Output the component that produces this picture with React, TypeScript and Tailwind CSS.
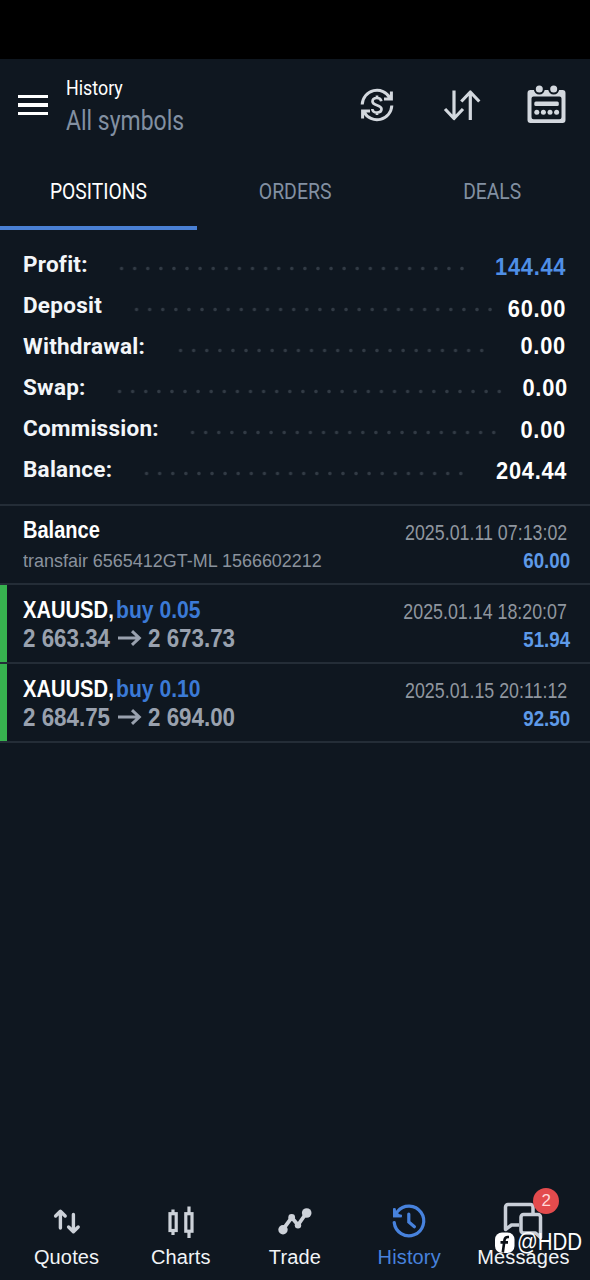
import React from 'react';

const summary = [
  { label: 'Profit:', value: '144.44', dots: 'left-[115px] w-[354px]', valueClass: 'text-[#4f8fe6] pt-[2px] pr-[24px]' },
  { label: 'Deposit', value: '60.00', dots: 'left-[130px] w-[367px]', valueClass: 'text-white pt-[3px] pr-[24px]' },
  { label: 'Withdrawal:', value: '0.00', dots: 'left-[174px] w-[315px]', valueClass: 'text-white -mt-px pr-[24px]' },
  { label: 'Swap:', value: '0.00', dots: 'left-[113px] w-[393px]', valueClass: 'text-white pt-0 pr-[22px]' },
  { label: 'Commission:', value: '0.00', dots: 'left-[186px] w-[315px]', valueClass: 'text-white pt-[1px] pr-[24px]' },
  { label: 'Balance:', value: '204.44', dots: 'left-[140px] w-[328px]', valueClass: 'text-white pt-[1px] pr-[23px]' },
];

const deals = [
  { symbol: 'XAUUSD,', side: 'buy 0.05', open: '2 663.34', close: '2 673.73', time: '2025.01.14 18:20:07', profit: '51.94' },
  { symbol: 'XAUUSD,', side: 'buy 0.10', open: '2 684.75', close: '2 694.00', time: '2025.01.15 20:11:12', profit: '92.50' },
];

const ExchangeIcon = () => (
  <svg width="34" height="34" viewBox="0 0 34 34" fill="none" stroke="#d3d8de" strokeWidth="3">
    <path d="M2.2 16.5A14.8 14.8 0 0 1 30 10" />
    <path d="M31.4 3.500v7.500H24" />
    <path d="M29 7.500l3 4.500h-6z" fill="#d3d8de" stroke="none" />
    <path d="M31.8 17.500A14.8 14.8 0 0 1 4 24" />
    <path d="M2.600 30.500V23H10" />
    <path d="M5 26.500L2 22h6z" fill="#d3d8de" stroke="none" />
    <path d="M21.300 13.200c-.3-2-2-3.200-4.400-3.200-2.600 0-4.400 1.300-4.400 3.500 0 4.600 9 2.800 9 7.500 0 2.200-1.900 3.500-4.600 3.500s-4.400-1.300-4.600-3.500M17 7.500v2.500M17 24.500V27" strokeWidth="2.700" />
  </svg>
);

const SortIcon = () => (
  <svg width="40" height="34" viewBox="0 0 40 34" fill="none" stroke="#d3d8de" strokeWidth="3.2" strokeLinejoin="round">
    <path d="M12 2.500V30.500M3 21l9 9.500 9-9.500" />
    <path d="M28.300 32V4M19.300 13.500l9-9.500 9 9.500" />
  </svg>
);

const CalendarIcon = () => (
  <svg width="40" height="40" viewBox="0 0 40 40">
    <path fill="#d3d8de" fillRule="evenodd" d="M3.500 6h32a3 3 0 0 1 3 3V36a3 3 0 0 1-3 3h-32a3 3 0 0 1-3-3V9a3 3 0 0 1 3-3zM6.500 12.500a2 2 0 0 0-2 2v18.800a2 2 0 0 0 2 2h26a2 2 0 0 0 2-2V14.500a2 2 0 0 0-2-2z" />
    <g fill="#d3d8de" stroke="#0f1720" strokeWidth="2">
      <circle cx="12.300" cy="5" r="4.500" />
      <circle cx="26.700" cy="5" r="4.500" />
    </g>
    <g fill="#d3d8de">
      <rect x="7.300" y="17.500" width="24.500" height="4.600" rx="1.500" />
      <circle cx="9.800" cy="28.300" r="2.500" />
      <circle cx="16.400" cy="28.300" r="2.500" />
      <circle cx="23" cy="28.300" r="2.500" />
      <circle cx="29.600" cy="28.300" r="2.500" />
    </g>
  </svg>
);

const QuotesIcon = () => (
  <svg width="44" height="40" viewBox="0 0 44 40" fill="none" stroke="#cdd2d9" strokeWidth="3.4" strokeLinecap="round" strokeLinejoin="round">
    <path d="M15.400 27V10.500M10.600 15l4.800-4.700 4.800 4.700" />
    <path d="M28.400 13.500v17M23.600 26l4.800 4.700 4.800-4.700" />
  </svg>
);

const ChartsIcon = () => (
  <svg width="44" height="40" viewBox="0 0 44 40" fill="none" stroke="#cdd2d9" strokeWidth="3.2">
    <rect x="11" y="12.700" width="6.200" height="16.800" />
    <path d="M14 8.500v4M14 29.500V34" />
    <rect x="26.800" y="12.700" width="6.200" height="17.500" />
    <path d="M30 5.500v7M30 31v6" />
  </svg>
);

const TradeIcon = () => (
  <svg width="44" height="40" viewBox="0 0 44 40" fill="#cdd2d9">
    <path d="M10 28.300L18.700 16.500 25 24l8.700-12.500" fill="none" stroke="#cdd2d9" strokeWidth="3.800" />
    <circle cx="10" cy="28.700" r="4.700" />
    <circle cx="18.700" cy="16.500" r="3.400" />
    <circle cx="25" cy="24.200" r="3.200" />
    <circle cx="33.700" cy="12" r="4.800" />
  </svg>
);

const HistoryIcon = () => (
  <svg width="44" height="40" viewBox="0 0 44 40" fill="none" stroke="#4782dd" strokeWidth="3.2" strokeLinecap="round">
    <path d="M7.200 21.500A14.800 14.800 0 1 0 10.500 10.500" />
    <path d="M6 7v9.300h9.300z" fill="#4782dd" stroke="none" />
    <path d="M7.500 8.500v6.300h6.200" strokeWidth="2.800" />
    <path d="M21.800 13v8l5.600 4.800" />
  </svg>
);

const MessagesIcon = () => (
  <svg width="44" height="40" viewBox="0 0 44 40" fill="none" stroke="#c9cfd8" strokeWidth="3.5" strokeLinejoin="round">
    <path d="M32 12V6a2.500 2.500 0 0 0-2.500-2.500H7a2.500 2.500 0 0 0-2.500 2.500v22.500l6-4.500H18" />
    <path d="M39.500 36.500V16a2.500 2.500 0 0 0-2.500-2.500H22.500a2.500 2.500 0 0 0-2.500 2.500v13.500a2.500 2.500 0 0 0 2.500 2.500h12z" />
  </svg>
);

const ArrowRight = () => (
  <svg width="24" height="18" viewBox="0 0 24 18" fill="none" stroke="#99a1ae" strokeWidth="3">
    <path d="M0 9h21M14 2.200L21.300 9l-7.300 6.800" />
  </svg>
);

const navItems = [
  { name: 'Quotes', icon: <QuotesIcon /> },
  { name: 'Charts', icon: <ChartsIcon /> },
  { name: 'Trade', icon: <TradeIcon /> },
  { name: 'History', icon: <HistoryIcon />, active: true },
  { name: 'Messages', icon: <MessagesIcon />, badge: 2 },
];

const Stamp: React.FC<{ time: string; amount: string }> = ({ time, amount }) => (
  <div className="flex flex-col items-end whitespace-nowrap text-[22px]">
    <span className="mr-[23px] origin-right scale-x-[0.81] leading-[33px] text-[#8f969f]">{time}</span>
    <span className="mr-[20px] origin-right scale-x-[0.85] font-bold leading-[23px] text-[#5e9ae8]">{amount}</span>
  </div>
);

const App: React.FC = () => {
  return (
    <div className="relative flex h-[1280px] w-[590px] flex-col overflow-hidden bg-[#0f1720] font-['Liberation_Sans',Arial,sans-serif]">
      <div className="h-[59px] shrink-0 bg-black" />

      {/* Header */}
      <header className="flex h-[93px] shrink-0 items-start pl-[18px] font-['Roboto',sans-serif]">
        <div className="mt-[36px] flex w-[30px] flex-col gap-[5px]">
          <span className="h-[3.3px] bg-white" />
          <span className="h-[3.3px] bg-white" />
          <span className="h-[3.3px] bg-white" />
        </div>
        <div className="flex w-[294px] flex-col items-start whitespace-nowrap pl-[18px] pt-[16px]">
          <h1 className="origin-left scale-x-[0.85] text-[21px] leading-[26px] text-white">History</h1>
          <p className="origin-left scale-x-[0.85] text-[27px] leading-[40px] text-[#8290a2]">All symbols</p>
        </div>
        <div className="ml-[18px] mt-[29px]"><ExchangeIcon /></div>
        <div className="ml-[48px] mt-[29px]"><SortIcon /></div>
        <div className="ml-[45px] mt-[25px]"><CalendarIcon /></div>
      </header>

      {/* Tabs */}
      <div className="grid h-[78px] shrink-0 grid-cols-3 font-['Roboto',sans-serif] text-[22px] text-[#8290a2]">
        <div className="flex items-center justify-center border-b-4 border-[#4a80d4] pt-1 text-white">
          <span className="scale-x-[0.875]">POSITIONS</span>
        </div>
        <div className="flex items-center justify-center">
          <span className="scale-x-[0.885]">ORDERS</span>
        </div>
        <div className="flex items-center justify-center">
          <span className="scale-x-[0.875]">DEALS</span>
        </div>
      </div>

      {/* Account summary */}
      <div className="h-[274px] shrink-0 pt-[14px]">
        {summary.map((row) => (
          <div key={row.label} className="relative flex h-[41.1px] justify-between pl-[23px]">
            <span className="font-['Roboto',sans-serif] text-[22.5px] font-bold leading-[41px] tracking-[0.25px] text-[#f3f6f9]">{row.label}</span>
            <div className={`absolute top-[22px] h-[5px] bg-[radial-gradient(circle,#323b45_1.2px,transparent_2.2px)] bg-[size:13.1px_5px] ${row.dots}`} />
            <span className={`text-[24px] font-bold leading-[41px] ${row.valueClass}`}>
              <span className="inline-block origin-right scale-x-[0.91] tracking-[0.8px]">{row.value}</span>
            </span>
          </div>
        ))}
      </div>

      {/* Operations */}
      <div className="shrink-0 border-b-2 border-[#242d37]">
        <div className="flex h-[79px] justify-between border-t-2 border-[#242d37] pl-[23px] pt-[10px]">
          <div className="flex flex-col items-start whitespace-nowrap">
            <span className="origin-left scale-x-[0.835] text-[24px] font-bold leading-[28px] text-white">Balance</span>
            <span className="origin-left scale-x-[0.945] text-[19px] leading-[34px] text-[#8a929d]">transfair 6565412GT-ML 1566602212</span>
          </div>
          <Stamp time="2025.01.11 07:13:02" amount="60.00" />
        </div>
        {deals.map((deal) => (
          <div key={deal.time} className="flex h-[79px] border-t-2 border-[#242d37]">
            <div className="w-[7px] bg-[#37b34f]" />
            <div className="flex flex-1 justify-between pl-[16px] pt-[10px]">
              <div className="whitespace-nowrap font-bold">
                <div className="flex text-[24px] leading-[29px]">
                  <span className="w-[93px]"><span className="inline-block origin-left scale-x-[0.84] text-white">{deal.symbol}</span></span>
                  <span className="origin-left scale-x-[0.88] text-[#3b7ad6]">{deal.side}</span>
                </div>
                <div className="flex items-center text-[26px] leading-[28px] text-[#99a1ae]">
                  <span className="w-[95px]"><span className="inline-block origin-left scale-x-[0.86]">{deal.open}</span></span>
                  <span className="w-[30px]"><ArrowRight /></span>
                  <span className="origin-left scale-x-[0.86]">{deal.close}</span>
                </div>
              </div>
              <Stamp time={deal.time} amount={deal.profit} />
            </div>
          </div>
        ))}
      </div>

      {/* Bottom navigation */}
      <nav className="mt-auto grid h-[79px] shrink-0 grid-cols-5 px-[9.5px] text-[20px]">
        {navItems.map((item) => (
          <div key={item.name} className="relative flex flex-col items-center">
            {item.icon}
            <span className={`mt-[2px] leading-[28px] tracking-[0.15px] ${item.active ? 'text-[#4782dd]' : 'text-[#f1f4f7]'}`}>{item.name}</span>
            {item.badge && (
              <span className="absolute left-[67px] top-[-13px] flex h-[26px] w-[26px] items-center justify-center rounded-full bg-[#e34b4d] text-[17px] text-[#ffd9d9]">
                {item.badge}
              </span>
            )}
          </div>
        ))}
      </nav>

      {/* Watermark */}
      <div className="absolute left-[495px] top-[1230px] flex items-center whitespace-nowrap text-white">
        <svg width="20" height="21" viewBox="0 0 20 21" fill="none">
          <rect width="19.500" height="20.500" y="0.500" rx="7" fill="white" />
          <path d="M14 5h-1.200c-2 0-3 1-3.300 3L7.800 20.500M5.500 10.400h7.500" stroke="#0b1016" strokeWidth="2.600" />
        </svg>
        <span className="ml-[2px] origin-left scale-x-[0.89] text-[23px] leading-[25px]">@HDD</span>
      </div>
    </div>
  );
};

export default App;
